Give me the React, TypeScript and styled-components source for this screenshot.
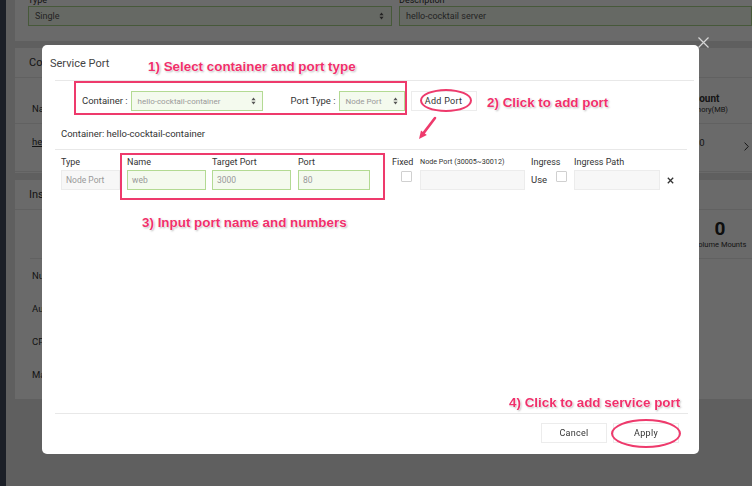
import React from "react";
import styled, { createGlobalStyle } from "styled-components";

const GlobalStyle = createGlobalStyle`
  html, body { margin: 0; padding: 0; }
  body {
    font-family: Roboto, "Liberation Sans", Arial, sans-serif;
    overflow: hidden;
    width: 752px;
    height: 486px;
  }
  * { box-sizing: border-box; }
`;

/* ---------- background page ---------- */
const Page = styled.div`
  display: flex;
  width: 752px;
  height: 486px;
  background: #e2e2e2;
  overflow: hidden;
`;
const SideNav = styled.div`
  width: 6px;
  flex: none;
  background: #404a5d;
`;
const Main = styled.div`
  flex: 1;
  display: flex;
  flex-direction: column;
  gap: 7px;
  padding-left: 9px;
  margin-top: -14px;
  min-width: 0;
`;
const Panel = styled.section<{ $h: number }>`
  background: #fcfcfc;
  height: ${(p) => p.$h}px;
  display: flex;
  flex-direction: column;
  flex: none;
`;
const TopGrid = styled.div`
  display: grid;
  grid-template-columns: 364px 1fr;
  column-gap: 7px;
  padding: 8px 0 0 13px;
`;
const FieldCol = styled.div`
  display: flex;
  flex-direction: column;
`;
const BgLabel = styled.div`
  font-size: 9px;
  line-height: 12px;
  color: #333;
`;
const BgSelect = styled.div`
  height: 20px;
  border: 1px solid #a9d48a;
  background: #f4faee;
  display: flex;
  align-items: center;
  justify-content: space-between;
  padding: 0 7px 0 6px;
  font-size: 9px;
  color: #555;
`;
const PanelHead = styled.div`
  height: 30px;
  flex: none;
  display: flex;
  align-items: center;
  padding-left: 14px;
  font-size: 11px;
  color: #333;
  border-bottom: 1px solid #e6e6e6;
`;
const TableRow = styled.div<{ $h: number; $align: string }>`
  height: ${(p) => p.$h}px;
  flex: none;
  display: flex;
  align-items: ${(p) => p.$align};
  padding-left: 17px;
  border-bottom: 1px solid #e6e6e6;
  font-size: 9.5px;
  color: #333;
`;
const NameCell = styled.div<{ $pad: number }>`
  flex: 1;
  padding: ${(p) => p.$pad}px 0;
`;
const LinkText = styled.span`
  text-decoration: underline;
`;
const CountCell = styled.div<{ $pad: number; $shift: number }>`
  width: 44px;
  text-align: center;
  padding: ${(p) => p.$pad}px ${(p) => p.$shift}px ${(p) => p.$pad}px 0;
  display: flex;
  flex-direction: column;
  align-items: center;
`;
const CountHead = styled.span`
  font-weight: 700;
  font-size: 10px;
  line-height: 12px;
`;
const CountSub = styled.span`
  font-size: 7.5px;
  line-height: 10px;
`;
const ChevCell = styled.div`
  width: 24px;
  display: flex;
  justify-content: flex-end;
  padding: 0 3px 3px 0;
  align-self: center;
`;
const StatsRow = styled.div`
  height: 49px;
  flex: none;
  display: flex;
  justify-content: flex-end;
  align-items: center;
  border-bottom: 1px solid #e6e6e6;
  margin-left: 15px;
`;
const Stat = styled.div`
  width: 62px;
  display: flex;
  flex-direction: column;
  align-items: center;
  padding-right: 2px;
`;
const StatNum = styled.div`
  font-size: 19px;
  font-weight: 700;
  line-height: 22px;
  color: #222;
`;
const StatLabel = styled.div`
  font-size: 7.5px;
  line-height: 10px;
  color: #333;
`;
const InfoRow = styled.div`
  height: 33px;
  flex: none;
  display: flex;
  align-items: center;
  padding-left: 17px;
  font-size: 9.5px;
  color: #333;
`;
const Backdrop = styled.div`
  position: fixed;
  inset: 0;
  background: rgba(0, 0, 0, 0.58);
`;

/* ---------- modal ---------- */
const Modal = styled.div`
  position: fixed;
  left: 42px;
  top: 45px;
  width: 657px;
  height: 409px;
  background: #fff;
  border-radius: 5px;
  display: flex;
  flex-direction: column;
`;
const CloseBtn = styled.div`
  position: fixed;
  left: 698px;
  top: 37px;
  width: 11px;
  height: 11px;
  display: flex;
`;
const Header = styled.div`
  height: 35px;
  flex: none;
  display: flex;
  align-items: center;
  padding: 1px 0 0 8px;
  font-size: 11px;
  color: #444;
`;
const Rule = styled.div<{ $ml: number; $mr: number }>`
  height: 1px;
  flex: none;
  background: #e8e8e8;
  margin: 0 ${(p) => p.$mr}px 0 ${(p) => p.$ml}px;
`;
const Body = styled.div`
  flex: 1;
  display: flex;
  flex-direction: column;
  padding: 0 12px 0 13px;
`;
const ControlRow = styled.div`
  height: 39px;
  flex: none;
  display: flex;
  align-items: flex-start;
  padding: 10px 0 0 27px;
`;
const CtlLabel = styled.span<{ $ml: number }>`
  font-size: 9.5px;
  line-height: 20px;
  color: #333;
  margin-left: ${(p) => p.$ml}px;
  margin-right: 3px;
  white-space: nowrap;
`;
const Select = styled.div<{ $w: number }>`
  width: ${(p) => p.$w}px;
  height: 20px;
  flex: none;
  border: 1px solid #b3da93;
  background: #f4faee;
  display: flex;
  align-items: center;
  justify-content: space-between;
  padding: 0 6px 0 6px;
  font-size: 8px;
  color: #999;
  white-space: nowrap;
`;
const PlainButton = styled.div<{ $w: number; $ml: number }>`
  width: ${(p) => p.$w}px;
  height: 20px;
  flex: none;
  margin-left: ${(p) => p.$ml}px;
  border: 1px solid #ececec;
  background: #fff;
  display: flex;
  align-items: center;
  justify-content: center;
  font-size: 9px;
  color: #333;
  letter-spacing: 0.3px;
`;
const ContainerTitle = styled.div`
  height: 29px;
  flex: none;
  display: flex;
  align-items: center;
  padding: 0 0 2px 6px;
  font-size: 9.5px;
  color: #333;
`;
const FieldRow = styled.div`
  display: flex;
  padding: 6px 0 0 6px;
`;
const Col = styled.div<{ $w: number; $ml: number }>`
  width: ${(p) => p.$w}px;
  margin-left: ${(p) => p.$ml}px;
  flex: none;
  display: flex;
  flex-direction: column;
`;
const FLabel = styled.div<{ $small?: boolean }>`
  height: 12px;
  line-height: 12px;
  font-size: ${(p) => (p.$small ? "7.2px" : "9px")};
  color: #333;
  white-space: nowrap;
`;
const Input = styled.div<{ $tone: "green" | "gray" }>`
  height: 20px;
  margin-top: 2px;
  border: 1px solid ${(p) => (p.$tone === "green" ? "#b3da93" : "#ececec")};
  background: ${(p) => (p.$tone === "green" ? "#f4faee" : "#f7f7f7")};
  display: flex;
  align-items: center;
  padding-left: 4px;
  font-size: 8.5px;
  color: #999;
`;
const Check = styled.div<{ $ml: number }>`
  width: 11px;
  height: 11px;
  margin-top: 3px;
  margin-left: ${(p) => p.$ml}px;
  border: 1px solid #d0d0d0;
  border-radius: 1px;
  background: #fff;
`;
const UseLine = styled.div`
  display: flex;
  align-items: flex-start;
  height: 22px;
`;
const UseText = styled.span`
  font-size: 9.5px;
  line-height: 14px;
  margin-top: 5px;
  color: #333;
`;
const RemoveCol = styled.div`
  margin-left: 7px;
  padding-top: 21px;
  display: flex;
`;
const Footer = styled.div`
  height: 40px;
  flex: none;
  display: flex;
  justify-content: flex-end;
  align-items: flex-start;
  gap: 6px;
  padding: 9px 20px 0 0;
`;

/* ---------- annotations ---------- */
const Callout = styled.div<{ $x: number; $y: number }>`
  position: absolute;
  left: ${(p) => p.$x}px;
  top: ${(p) => p.$y}px;
  font-family: "Liberation Sans", Arial, sans-serif;
  font-weight: 700;
  font-size: 13.4px;
  line-height: 16px;
  color: #f0306b;
  white-space: nowrap;
  text-shadow: 0 0 1px #fff, 0 0 2px #fff, 0 0 2px #fff, 1px 1px 2px rgba(0, 0, 0, 0.35);
`;
const MarkBox = styled.div<{ $x: number; $y: number; $w: number; $h: number }>`
  position: absolute;
  left: ${(p) => p.$x}px;
  top: ${(p) => p.$y}px;
  width: ${(p) => p.$w}px;
  height: ${(p) => p.$h}px;
  border: 2px solid #ee3a6c;
`;
const MarkEllipse = styled.div<{ $x: number; $y: number; $w: number; $h: number }>`
  position: absolute;
  left: ${(p) => p.$x}px;
  top: ${(p) => p.$y}px;
  width: ${(p) => p.$w}px;
  height: ${(p) => p.$h}px;
  border: 2px solid #ee3a6c;
  border-radius: 50%;
`;
const ArrowSvg = styled.svg`
  position: absolute;
  left: 372px;
  top: 70px;
`;

const UpDown = () => (
  <svg width="5" height="8" viewBox="0 0 5 8">
    <path d="M2.5 0.5 L4.6 3.2 H0.4 Z M2.5 7.5 L4.6 4.8 H0.4 Z" fill="#555" />
  </svg>
);

const Chevron = () => (
  <svg width="5" height="9" viewBox="0 0 5 9">
    <path d="M0.6 0.6 L4.3 4.5 L0.6 8.4" stroke="#333" strokeWidth="1" fill="none" />
  </svg>
);

export default function App() {
  return (
    <>
      <GlobalStyle />
      <Page>
        <SideNav />
        <Main>
          <Panel $h={55}>
            <TopGrid>
              <FieldCol>
                <BgLabel>Type</BgLabel>
                <BgSelect>
                  <span>Single</span>
                  <UpDown />
                </BgSelect>
              </FieldCol>
              <FieldCol>
                <BgLabel>Description</BgLabel>
                <BgSelect>
                  <span>hello-cocktail server</span>
                </BgSelect>
              </FieldCol>
            </TopGrid>
          </Panel>
          <Panel $h={125}>
            <PanelHead>Containers</PanelHead>
            <TableRow $h={46} $align="flex-end">
              <NameCell $pad={9}>Name</NameCell>
              <CountCell $pad={8} $shift={0}>
                <CountHead>Count</CountHead>
                <CountSub>Memory(MB)</CountSub>
              </CountCell>
              <ChevCell />
            </TableRow>
            <TableRow $h={48} $align="flex-start">
              <NameCell $pad={12}>
                <LinkText>hello-cocktail-container</LinkText>
              </NameCell>
              <CountCell $pad={13} $shift={8}>0</CountCell>
              <ChevCell>
                <Chevron />
              </ChevCell>
            </TableRow>
          </Panel>
          <Panel $h={219}>
            <PanelHead>Instance</PanelHead>
            <StatsRow>
              <Stat>
                <StatNum>0</StatNum>
                <StatLabel>Volume Mounts</StatLabel>
              </Stat>
            </StatsRow>
            <InfoRow>Number of Instances</InfoRow>
            <InfoRow>Auto Scaling</InfoRow>
            <InfoRow>CPU Limit</InfoRow>
            <InfoRow>Max Instances</InfoRow>
          </Panel>
        </Main>
      </Page>
      <Backdrop />
      <CloseBtn>
        <svg width="11" height="11" viewBox="0 0 11 11">
          <path d="M0.5 0.5 L10.5 10.5 M10.5 0.5 L0.5 10.5" stroke="#d6d6d6" strokeWidth="1.2" />
        </svg>
      </CloseBtn>
      <Modal>
        <Header>Service Port</Header>
        <Rule $ml={13} $mr={5} />
        <Body>
          <ControlRow>
            <CtlLabel $ml={0}>Container :</CtlLabel>
            <Select $w={132}>
              <span>hello-cocktail-container</span>
              <UpDown />
            </Select>
            <CtlLabel $ml={28}>Port Type :</CtlLabel>
            <Select $w={66}>
              <span>Node Port</span>
              <UpDown />
            </Select>
            <PlainButton $w={66} $ml={6}>Add Port</PlainButton>
          </ControlRow>
          <ContainerTitle>Container: hello-cocktail-container</ContainerTitle>
          <Rule $ml={0} $mr={0} />
          <FieldRow>
            <Col $w={59} $ml={0}>
              <FLabel>Type</FLabel>
              <Input $tone="gray">Node Port</Input>
            </Col>
            <Col $w={79} $ml={7}>
              <FLabel>Name</FLabel>
              <Input $tone="green">web</Input>
            </Col>
            <Col $w={79} $ml={6}>
              <FLabel>Target Port</FLabel>
              <Input $tone="green">3000</Input>
            </Col>
            <Col $w={72} $ml={7}>
              <FLabel>Port</FLabel>
              <Input $tone="green">80</Input>
            </Col>
            <Col $w={21} $ml={22}>
              <FLabel>Fixed</FLabel>
              <Check $ml={9} />
            </Col>
            <Col $w={105} $ml={7}>
              <FLabel $small>Node Port (30005~30012)</FLabel>
              <Input $tone="gray" />
            </Col>
            <Col $w={36} $ml={6}>
              <FLabel>Ingress</FLabel>
              <UseLine>
                <UseText>Use</UseText>
                <Check $ml={9} />
              </UseLine>
            </Col>
            <Col $w={86} $ml={7}>
              <FLabel>Ingress Path</FLabel>
              <Input $tone="gray" />
            </Col>
            <RemoveCol>
              <svg width="7" height="7" viewBox="0 0 7 7">
                <path d="M0.8 0.8 L6.2 6.2 M6.2 0.8 L0.8 6.2" stroke="#333" strokeWidth="1.3" />
              </svg>
            </RemoveCol>
          </FieldRow>
        </Body>
        <Rule $ml={13} $mr={11} />
        <Footer>
          <PlainButton $w={66} $ml={0}>Cancel</PlainButton>
          <PlainButton $w={66} $ml={0}>Apply</PlainButton>
        </Footer>

        <MarkBox $x={32} $y={36} $w={333} $h={34} />
        <MarkBox $x={78} $y={108} $w={265} $h={47} />
        <MarkEllipse $x={378} $y={44} $w={52} $h={23} />
        <MarkEllipse $x={569} $y={374} $w={70} $h={29} />
        <ArrowSvg width="28" height="30" viewBox="0 0 28 30">
          <path d="M21 3 L9.9 17.6" stroke="#ee3a6c" strokeWidth="2.6" strokeLinecap="round" />
          <path d="M5 24 L12.8 19.9 L7 15.4 Z" fill="#ee3a6c" />
        </ArrowSvg>
        <Callout $x={106} $y={14}>1) Select container and port type</Callout>
        <Callout $x={445} $y={50}>2) Click to add port</Callout>
        <Callout $x={100} $y={170}>3) Input port name and numbers</Callout>
        <Callout $x={467} $y={350}>4) Click to add service port</Callout>
      </Modal>
    </>
  );
}
